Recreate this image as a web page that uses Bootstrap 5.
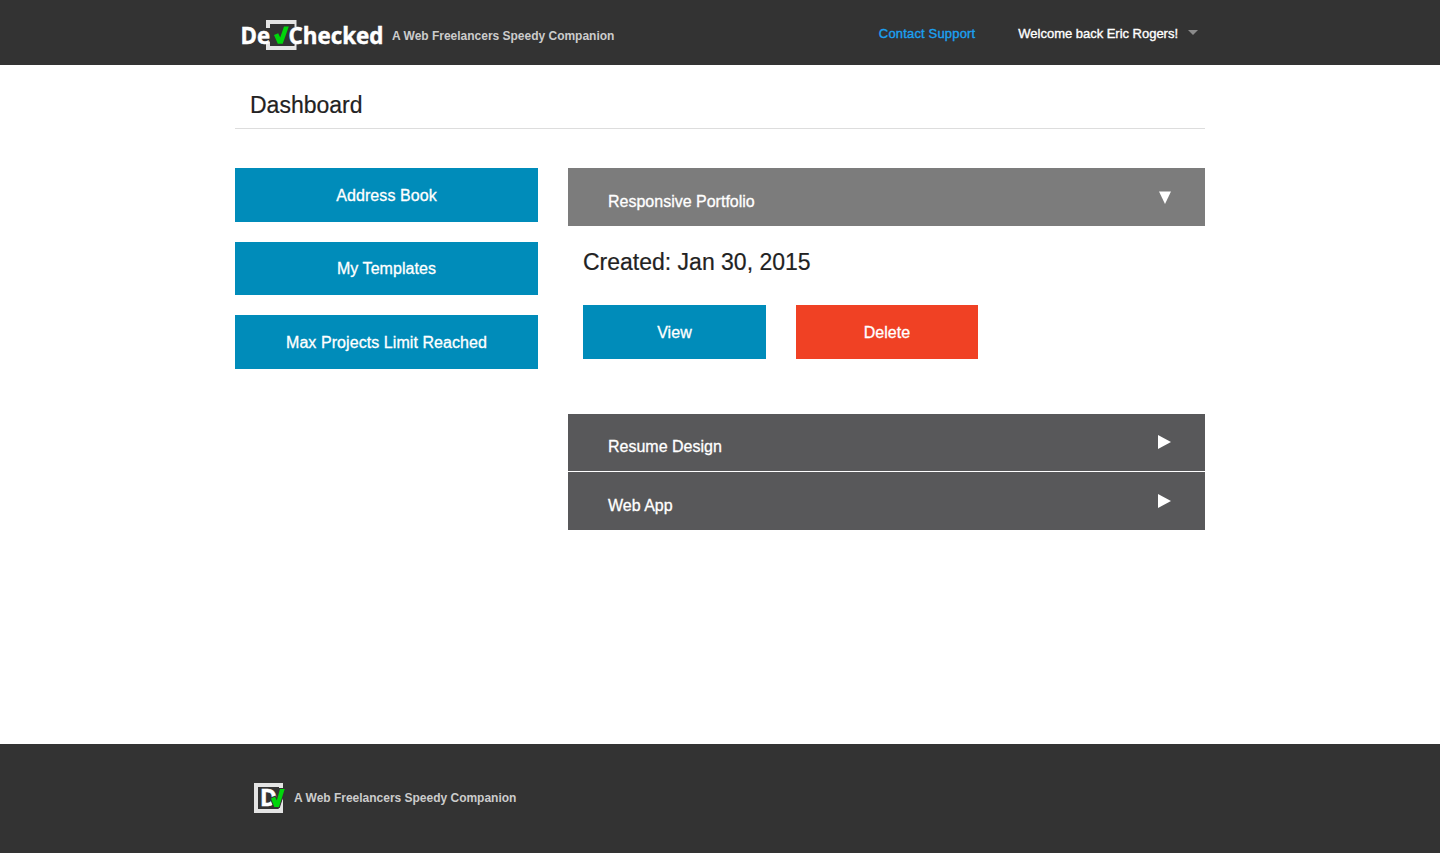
<!DOCTYPE html>
<html lang="en">
<head>
<meta charset="utf-8">
<meta name="viewport" content="width=device-width, initial-scale=1">
<title>DevChecked - Dashboard</title>
<link href="https://cdn.jsdelivr.net/npm/bootstrap@5.3.0/dist/css/bootstrap.min.css" rel="stylesheet">
<style>
body{font-family:"Liberation Sans",Arial,sans-serif;color:#222;font-size:16px;line-height:1}
.shell{width:970px}
.site-header{height:65px;background:#333}
.site-footer{height:109px;background:#333}
.brand-link{margin-left:5px}
.tagline{font-size:12px;font-weight:700;color:#ccc;letter-spacing:-.01px}
.site-header .tagline{margin:30px 0 0 2px}
.site-footer .tagline{margin:48px 0 0 9px}
.top-nav{padding:27px 7px 0 0}
.top-link{font-size:13px;color:#1ba1f2;letter-spacing:.17px;-webkit-text-stroke:.35px}
.top-user{font-size:13px;letter-spacing:-.02px;margin-left:43px;-webkit-text-stroke:.35px}
.top-user::after{color:#8b8b8b;border-width:5px 5px 0;margin-left:10px;vertical-align:3px}
.page-title{height:64px;padding:29px 15px 0;border-bottom:1px solid #ddd}
.page-title h1,.project-date{font-size:23px;font-weight:400;line-height:1;margin:0;-webkit-text-stroke:.2px}
.columns{display:grid;grid-template-columns:303px 637px;column-gap:30px;margin-top:39px}
.action{display:flex;align-items:center;justify-content:center;height:53.6px;padding:2px 0 0;border:0;border-radius:0;background:#008cba;color:#fff;line-height:1;letter-spacing:.07px;-webkit-text-stroke:.3px}
.action-delete{background:#f04124}
.side{gap:20px}
.bar{height:58px;padding:9px 34px 0 40px;background:#58585a;color:#fff;-webkit-text-stroke:.3px}
.bar-short{height:57px}
.bar-open{background:#7c7c7c}
.bar svg{margin-top:-10px}
.project-body{height:188px;padding:25px 15px 0}
.project-buttons{display:grid;grid-template-columns:183px 182px;column-gap:30px;margin-top:31px}
.footer-logo{margin:39px 0 0 19px}
.logo-text{font-family:"Open Sans","Noto Sans",sans-serif;font-weight:700;font-size:23.5px;fill:#fff}
.logo-halo{fill:#333;stroke:#333;stroke-width:3px}
.logo-face{stroke:#fff;stroke-width:.5px}
</style>
</head>
<body class="d-flex flex-column vh-100">
<header class="site-header">
  <div class="shell mx-auto d-flex">
    <a href="#" class="brand-link d-block" aria-label="DevChecked">
      <svg class="d-block" width="150" height="65" viewBox="240 0 150 65">
        <path d="M266 20h30.500v7h-2v-3H270v22H294.500v-2h2v6H266z" fill="#e4e4e4"/>
        <path d="M263 28h8v13.500h-8zM289 27h8v17h-8z" fill="#333"/>
        <text class="logo-text logo-face" x="240.500" y="43.500" textLength="29.500" lengthAdjust="spacingAndGlyphs">De</text>
        <text class="logo-text logo-face" x="288.500" y="43.500" textLength="95" lengthAdjust="spacingAndGlyphs">Checked</text>
        <path d="M274 35l4.200-1.800 2 4.300L284 26.500h4.800L282.700 43.800h-4.900z" fill="#00d60b"/>
      </svg>
    </a>
    <span class="tagline">A Web Freelancers Speedy Companion</span>
    <nav class="top-nav d-flex ms-auto">
      <a href="#" class="top-link text-decoration-none">Contact Support</a>
      <a href="#" class="top-user text-white text-decoration-none dropdown-toggle">Welcome back Eric Rogers!</a>
    </nav>
  </div>
</header>
<main class="shell mx-auto flex-grow-1">
  <div class="page-title"><h1>Dashboard</h1></div>
  <div class="columns">
    <div class="side d-flex flex-column">
      <a href="#" class="btn action">Address Book</a>
      <a href="#" class="btn action">My Templates</a>
      <a href="#" class="btn action">Max Projects Limit Reached</a>
    </div>
    <section>
      <div class="bar bar-open d-flex align-items-center justify-content-between">
        <span>Responsive Portfolio</span>
        <svg width="12" height="14"><path d="M0 1.500h12L6 14z" fill="#fff"/></svg>
      </div>
      <div class="project-body">
        <h2 class="project-date">Created: Jan 30, 2015</h2>
        <div class="project-buttons">
          <a href="#" class="btn action">View</a>
          <a href="#" class="btn action action-delete">Delete</a>
        </div>
      </div>
      <div class="bar bar-short d-flex align-items-center justify-content-between mb-0">
        <span>Resume Design</span>
        <svg width="13" height="14"><path d="M0 0l13 7L0 14z" fill="#fff"/></svg>
      </div>
      <div class="bar d-flex align-items-center justify-content-between" style="margin-top:1px">
        <span>Web App</span>
        <svg width="13" height="14"><path d="M0 0l13 7L0 14z" fill="#fff"/></svg>
      </div>
    </section>
  </div>
</main>
<footer class="site-footer">
  <div class="shell mx-auto d-flex">
    <svg class="footer-logo d-block" width="31" height="30" viewBox="0 0 31 30">
      <path d="M0 0h29v5h-4V4H4v22h20.500L29 15v15H0z" fill="#e4e4e4"/>
      <text class="logo-text logo-face" style="font-size:22.500px" x="6" y="23" textLength="17" lengthAdjust="spacingAndGlyphs">D</text>
      <path d="M17 15.500l4-1.700 1.800 3.700L26 6h4.700L25 24H20.300z" fill="#00d60b" stroke="#333" stroke-width="2" paint-order="stroke"/>
    </svg>
    <span class="tagline">A Web Freelancers Speedy Companion</span>
  </div>
</footer>
<script src="https://cdn.jsdelivr.net/npm/bootstrap@5.3.0/dist/js/bootstrap.bundle.min.js"></script>
</body>
</html>
